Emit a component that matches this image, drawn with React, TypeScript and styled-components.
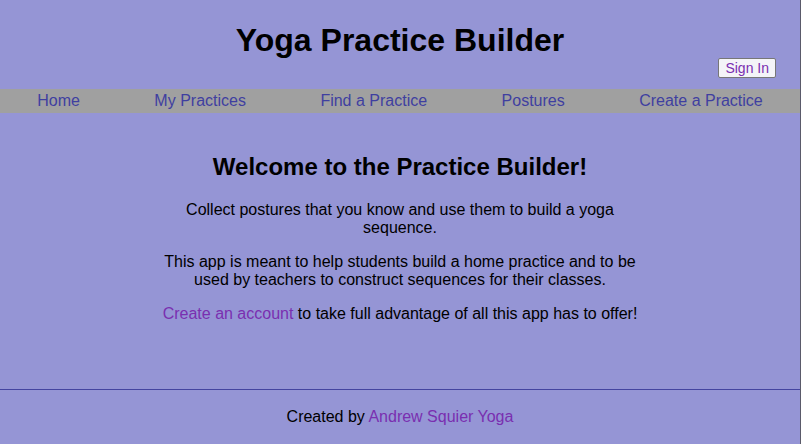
import React from "react";
import styled, { createGlobalStyle } from "styled-components";

const Global = createGlobalStyle`
  html, body { margin: 0; padding: 0; }
  body {
    background: #9595d5;
    font-family: "Liberation Sans", Arial, Helvetica, sans-serif;
    color: #000;
  }
`;

const Page = styled.div`
  height: 444px;
  display: flex;
  flex-direction: column;
  border-right: 1px solid #5a5a6a;
  box-sizing: border-box;
`;

const Header = styled.header`
  display: flex;
  flex-direction: column;
  align-items: center;
  padding-top: 22px;
`;

const Title = styled.h1`
  margin: 0;
  font-size: 32px;
  font-weight: bold;
  line-height: 37px;
`;

const AuthRow = styled.div`
  align-self: stretch;
  display: flex;
  justify-content: flex-end;
  padding-right: 24px;
  margin-top: -1px;
  margin-bottom: 11px;
`;

const SignIn = styled.button`
  font-family: "Liberation Sans", Arial, sans-serif;
  font-size: 14px;
  color: #7a2fb0;
  background: #f4f4f8;
  border: 1px solid #777;
  border-radius: 2px;
  padding: 1px 6px;
  height: 20px;
  line-height: 16px;
`;

const Nav = styled.nav`
  background: #a0a0a0;
  height: 24px;
  display: flex;
  justify-content: space-around;
  align-items: center;
`;

const NavLink = styled.a`
  color: #3f3fa0;
  font-size: 16px;
  text-decoration: none;
`;

const Main = styled.main`
  flex: 1;
  display: flex;
  flex-direction: column;
  align-items: center;
  padding-top: 40px;
  box-sizing: border-box;
`;

const Welcome = styled.h2`
  margin: 0 0 20px;
  font-size: 24px;
  font-weight: bold;
  line-height: 28px;
`;

const Text = styled.p<{ $wide?: boolean }>`
  margin: 0 0 16px;
  width: ${(p) => (p.$wide ? "520px" : "490px")};
  text-align: center;
  font-size: 16px;
  line-height: 18px;
`;

const Link = styled.a`
  color: #7a2fb0;
  text-decoration: none;
`;

const Footer = styled.footer`
  border-top: 1px solid #4444a0;
  height: 54px;
  display: flex;
  align-items: center;
  justify-content: center;
  font-size: 16px;
`;

export default function App() {
  return (
    <>
      <Global />
      <Page>
        <Header>
          <Title>Yoga Practice Builder</Title>
          <AuthRow>
            <SignIn>Sign In</SignIn>
          </AuthRow>
        </Header>
        <Nav>
          <NavLink href="#">Home</NavLink>
          <NavLink href="#">My Practices</NavLink>
          <NavLink href="#">Find a Practice</NavLink>
          <NavLink href="#">Postures</NavLink>
          <NavLink href="#">Create a Practice</NavLink>
        </Nav>
        <Main>
          <Welcome>Welcome to the Practice Builder!</Welcome>
          <Text>Collect postures that you know and use them to build a yoga sequence.</Text>
          <Text>
            This app is meant to help students build a home practice and to be used by teachers to
            construct sequences for their classes.
          </Text>
          <Text $wide>
            <Link href="#">Create an account</Link> to take full advantage of all this app has to offer!
          </Text>
        </Main>
        <Footer>
          <span>
            Created by <Link href="#">Andrew Squier Yoga</Link>
          </span>
        </Footer>
      </Page>
    </>
  );
}
